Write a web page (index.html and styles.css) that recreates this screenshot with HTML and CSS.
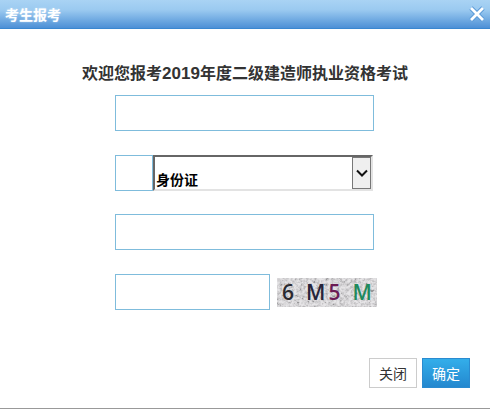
FILE: index.html
```html
<!DOCTYPE html>
<html lang="zh-CN">
<head>
    <meta charset="UTF-8">
    <title>考生报考</title>
    <link rel="stylesheet" href="styles.css">
</head>
<body>
    <div class="dialog">
        <div class="header">
            <div class="title">考生报考</div>
            <svg class="close" width="16" height="16" viewBox="0 0 16 16">
                <path d="M2 2 L14 14 M14 2 L2 14" stroke="#5b9ad8" stroke-width="4.6" fill="none"/>
                <path d="M2 2 L14 14 M14 2 L2 14" stroke="#fff" stroke-width="2.8" fill="none"/>
            </svg>
        </div>
        <div class="content">
            <h1 class="welcome">欢迎您报考<span class="year">2019</span>年度二级建造师执业资格考试</h1>
            <div class="form">
                <input class="field" type="text">
                <div class="id-row">
                    <input class="field id-prefix" type="text">
                    <div class="select-wrap">
                        <select class="id-select">
                            <option>身份证</option>
                        </select>
                        <span class="select-button">
                            <svg width="12" height="8" viewBox="0 0 12 8">
                                <path d="M1 1.5 L6 6.5 L11 1.5" stroke="#111" stroke-width="2" fill="none"/>
                            </svg>
                        </span>
                    </div>
                </div>
                <input class="field" type="text">
                <div class="code-row">
                    <input class="field code-input" type="text">
                    <div class="captcha">
                        <svg class="noise" width="100" height="29">
                            <filter id="grain">
                                <feTurbulence type="fractalNoise" baseFrequency="0.35" numOctaves="3" seed="4"/>
                                <feColorMatrix type="saturate" values="0"/>
                                <feComponentTransfer>
                                    <feFuncR type="linear" slope="3" intercept="-0.9"/>
                                    <feFuncG type="linear" slope="3" intercept="-0.9"/>
                                    <feFuncB type="linear" slope="3" intercept="-0.9"/>
                                    <feFuncA type="linear" slope="0" intercept="1"/>
                                </feComponentTransfer>
                            </filter>
                            <rect width="100" height="29" filter="url(#grain)"/>
                        </svg>
                        <span class="digit c-dark">6</span>
                        <span class="digit c-navy">M</span>
                        <span class="digit c-plum">5</span>
                        <span class="digit c-green">M</span>
                    </div>
                </div>
            </div>
            <div class="actions">
                <button class="btn btn-close">关闭</button>
                <button class="btn btn-ok">确定</button>
            </div>
        </div>
    </div>
</body>
</html>
```

FILE: styles.css
```css
body {
    margin: 0;
    font-family: "Liberation Sans", "Noto Sans CJK SC", sans-serif;
    background-color: #fff;
}

.dialog {
    height: 408px;
    border-bottom: 1px solid #999;
    display: flex;
    flex-direction: column;
}

.header {
    height: 28px;
    border-bottom: 1px solid #3a87d0;
    background: linear-gradient(to bottom, #a9d3f4 0%, #9bcaf0 35%, #4d90d6 100%);
    display: flex;
    justify-content: space-between;
    align-items: center;
    padding: 0 5px 0 5px;
}

.title {
    color: #fff;
    font-size: 14px;
    font-weight: bold;
    text-shadow: 0 0 2px rgba(255, 255, 255, 0.5);
}

.close {
    display: block;
}

.content {
    flex: 1;
    display: flex;
    flex-direction: column;
}

.welcome {
    margin: 35px 0 0 0;
    height: 31px;
    line-height: 20px;
    font-size: 16px;
    font-weight: bold;
    color: #333;
    text-align: center;
}

.year {
    font-size: 17px;
}

.form {
    display: flex;
    flex-direction: column;
    gap: 24px;
    padding-left: 115px;
}

.field {
    box-sizing: border-box;
    display: block;
    width: 259px;
    height: 36px;
    margin: 0;
    padding: 0 6px;
    border: 1px solid #7fbcdc;
    outline: none;
    background-color: #fff;
}

.id-row {
    display: flex;
    margin-bottom: -1px;
}

.id-prefix {
    width: 38px;
}

.select-wrap {
    position: relative;
    width: 220px;
    height: 36px;
}

.id-select {
    box-sizing: border-box;
    appearance: none;
    display: block;
    width: 100%;
    height: 36px;
    margin: 0;
    padding: 14px 0 0 1px;
    border-style: solid;
    border-width: 2px;
    border-color: #666 #e3e3e3 #e3e3e3 #666;
    border-radius: 0;
    outline: none;
    background-color: #fff;
    font-family: "Liberation Sans", "Noto Sans CJK SC", sans-serif;
    font-size: 14px;
    font-weight: bold;
    color: #000;
}

.select-button {
    position: absolute;
    top: 2px;
    right: 2px;
    box-sizing: border-box;
    width: 19px;
    height: 32px;
    border: 1px solid #777;
    background-color: #efefef;
    display: flex;
    justify-content: center;
    align-items: center;
}

.code-row {
    display: flex;
    align-items: center;
}

.code-input {
    width: 155px;
}

.captcha {
    position: relative;
    width: 100px;
    height: 29px;
    margin-left: 7px;
    background-color: #dcdadd;
    display: flex;
    align-items: center;
    font-family: "Open Sans", "Liberation Sans", sans-serif;
    font-size: 21px;
    font-weight: 600;
    line-height: 29px;
}

.noise {
    position: absolute;
    top: 0;
    left: 0;
    opacity: 0.3;
}

.digit {
    position: relative;
}

.c-dark {
    margin-left: 5px;
    color: #2a2a30;
}

.c-navy {
    margin-left: 12px;
    color: #26243a;
}

.c-plum {
    margin-left: 3px;
    color: #6b1b55;
}

.c-green {
    margin-left: 12px;
    color: #1f8a5c;
}

.actions {
    display: flex;
    justify-content: flex-end;
    gap: 5px;
    margin-top: 48px;
    padding-right: 20px;
}

.btn {
    box-sizing: border-box;
    width: 48px;
    height: 30px;
    padding: 0;
    font-family: "Liberation Sans", "Noto Sans CJK SC", sans-serif;
    font-size: 14px;
    cursor: pointer;
}

.btn-close {
    border: 1px solid #ccc;
    background-color: #fff;
    color: #333;
}

.btn-ok {
    border: 1px solid #2a8bd0;
    background: linear-gradient(to bottom, #33aeea, #2488cf);
    color: #fff;
}
```
